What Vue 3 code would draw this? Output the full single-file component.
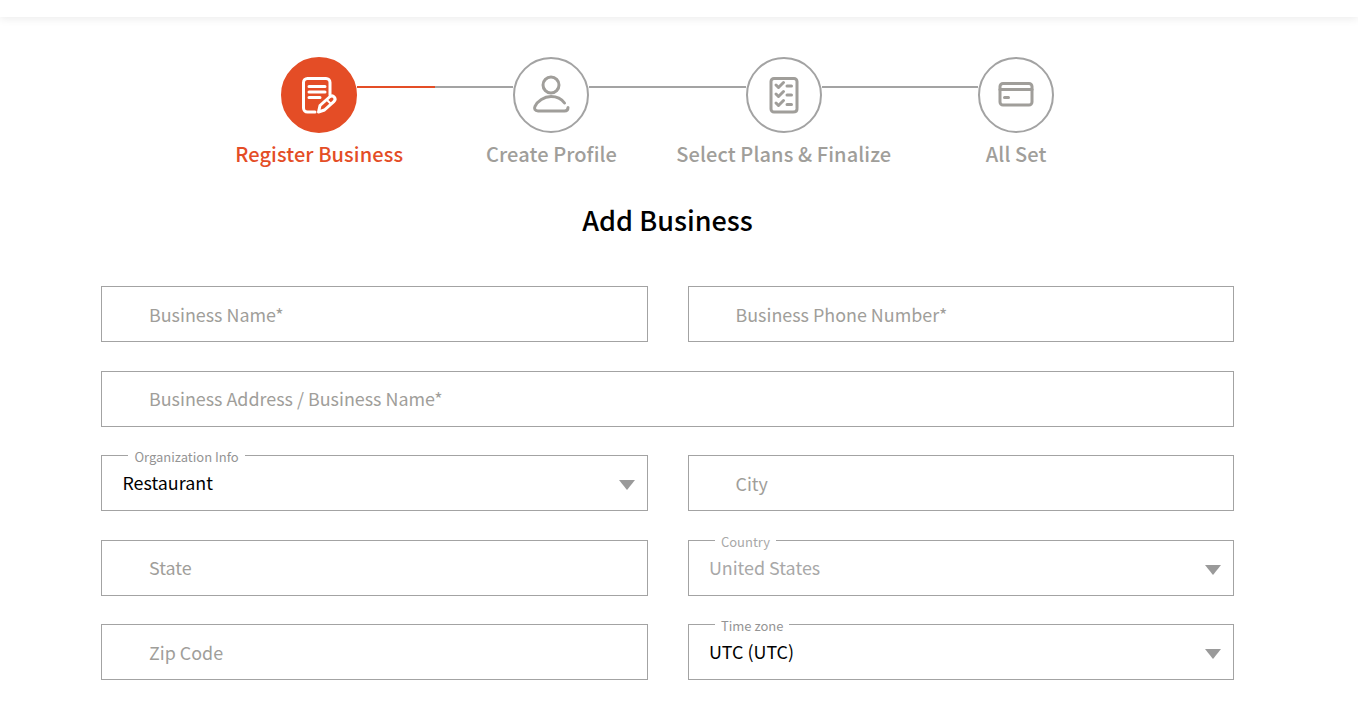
<template>
  <div class="page">
    <div class="topbar"></div>

    <div class="stepper">
      <div v-for="(step, i) in steps" :key="step.label" :class="['step', { active: i === 0 }]">
        <div class="circle">
          <svg v-if="step.icon === 'doc'" viewBox="0 0 76 76" class="icon">
            <path d="M34 55H26.500c-2.300 0-4-1.700-4-4V25.500c0-2.300 1.700-4 4-4h18.500c2.300 0 4 1.700 4 4V38" />
            <path d="M28 29.500h16M28 35h16M28 40.500h11" />
            <path d="M37.500 55l1.500-6.500 9.500-8.500c1.500-1.300 3.500-1.300 4.700 0 1.200 1.400 1 3.300-.4 4.600L43.500 53z" />
            <path d="M46 43l4 4" class="thin" />
          </svg>
          <svg v-else-if="step.icon === 'user'" viewBox="0 0 76 76" class="icon">
            <circle cx="38" cy="28" r="8" />
            <path d="M55 50.500c0 2.300-1.500 3.500-3.500 3.500H25c-3 0-4.200-2.200-3-4.700C24.500 44 31 39.500 38 39.500c5.500 0 10.500 2.300 13.500 6.500" />
          </svg>
          <svg v-else-if="step.icon === 'list'" viewBox="0 0 76 76" class="icon">
            <path d="M51 51.500V24.500c0-1.700-1.300-3-3-3H28c-1.700 0-3 1.300-3 3v27.500c0 1.700 1.300 3 3 3h19c2 0 4-1 4-3" />
            <path d="M30 28l2.500 2.500 5-5M30 37l2.500 2.500 5-5M30 46l2.500 2.500 5-5" />
            <path d="M41 29h4.500M41 38h4.500M41 47.500h4.500" />
          </svg>
          <svg v-else viewBox="0 0 76 76" class="icon">
            <rect x="22" y="26.500" width="32" height="21.500" rx="3" />
            <path d="M22 32.500h32" />
            <path d="M26.500 40.500h4" />
          </svg>
        </div>
        <div v-if="i < steps.length - 1" class="connector"></div>
        <div class="step-label">{{ step.label }}</div>
      </div>
    </div>

    <h1 class="title">Add Business</h1>

    <div class="form">
      <div v-for="field in fields" :key="field.text" :class="['field', { wide: field.wide, select: field.label, disabled: field.muted }]">
        <span v-if="field.label" class="field-label">{{ field.label }}</span>
        <span class="value">{{ field.text }}</span>
        <span v-if="field.label" class="arrow"></span>
      </div>
    </div>
  </div>
</template>

<script setup>
const steps = [
  { label: 'Register Business', icon: 'doc' },
  { label: 'Create Profile', icon: 'user' },
  { label: 'Select Plans & Finalize', icon: 'list' },
  { label: 'All Set', icon: 'card' }
]

const fields = [
  { text: 'Business Name*' },
  { text: 'Business Phone Number*' },
  { text: 'Business Address / Business Name*', wide: true },
  { text: 'Restaurant', label: 'Organization Info' },
  { text: 'City' },
  { text: 'State' },
  { text: 'United States', label: 'Country', muted: true },
  { text: 'Zip Code' },
  { text: 'UTC (UTC)', label: 'Time zone' }
]
</script>

<style>
html,
body {
  margin: 0;
  background: #fff;
}
</style>

<style scoped>
.page {
  height: 703px;
  overflow: hidden;
  font-family: "Noto Sans CJK KR", "Noto Sans", sans-serif;
  color: #000;
}

.topbar {
  height: 17px;
  background: #fff;
  box-shadow: 0 2px 8px rgba(0, 0, 0, 0.08);
}

.stepper {
  width: 929.33px;
  margin: 40px 0 0 203px;
  display: grid;
  grid-template-columns: repeat(4, 1fr);
}

.step {
  position: relative;
  display: flex;
  flex-direction: column;
  align-items: center;
}

.circle {
  width: 76px;
  height: 76px;
  box-sizing: border-box;
  border: 2px solid #a3a3a3;
  border-radius: 50%;
  background: #fff;
  color: #a09e9a;
}

.active .circle {
  background: #e44d26;
  border-color: #e44d26;
  color: #fff;
}

.icon {
  display: block;
  width: 76px;
  height: 76px;
  margin: -2px;
  fill: none;
  stroke: currentColor;
  stroke-width: 3;
  stroke-linecap: round;
  stroke-linejoin: round;
}

.icon .thin {
  stroke-width: 2;
}

.connector {
  position: absolute;
  top: 29px;
  left: calc(50% + 38px);
  width: calc(100% - 76px);
  height: 2px;
  background: #a3a3a3;
}

.active .connector {
  background: linear-gradient(to right, #e44d26 50%, #a3a3a3 50%);
}

.step-label {
  margin-top: 7px;
  margin-bottom: 1px;
  font-size: 20px;
  line-height: 28px;
  font-weight: 500;
  letter-spacing: 0.1px;
  color: #a09e9a;
  white-space: nowrap;
}

.active .step-label {
  color: #e44d26;
}

.title {
  width: 1133px;
  margin: 32px 0 0 101px;
  text-align: center;
  font-size: 27px;
  line-height: 38px;
  font-weight: 500;
}

.form {
  width: 1133px;
  margin: 47px 0 0 101px;
  display: grid;
  grid-template-columns: 1fr 1fr;
  column-gap: 40px;
  row-gap: 28.5px;
}

.field {
  position: relative;
  box-sizing: border-box;
  height: 56px;
  border: 1px solid #a3a3a3;
  padding-left: 47px;
  display: flex;
  align-items: center;
  font-size: 17.9px;
  color: #a09e9a;
}

.field.wide {
  grid-column: span 2;
}

.field.select {
  padding-left: 20.4px;
  color: #000;
}

.field.disabled {
  color: #a8a8a8;
}

.value {
  margin-top: -0.4px;
  line-height: 28px;
}

.select .value {
  margin-top: -2px;
}

.field-label {
  position: absolute;
  top: -9px;
  left: 26.4px;
  padding: 0 6px;
  background: #fff;
  font-size: 13px;
  line-height: 20px;
  color: #949494;
}

.disabled .field-label {
  color: #a8a8a8;
}

.arrow {
  position: absolute;
  right: 12px;
  top: 24px;
  width: 0;
  height: 0;
  border-left: 8px solid transparent;
  border-right: 8px solid transparent;
  border-top: 10px solid #9a9a9a;
}
</style>
